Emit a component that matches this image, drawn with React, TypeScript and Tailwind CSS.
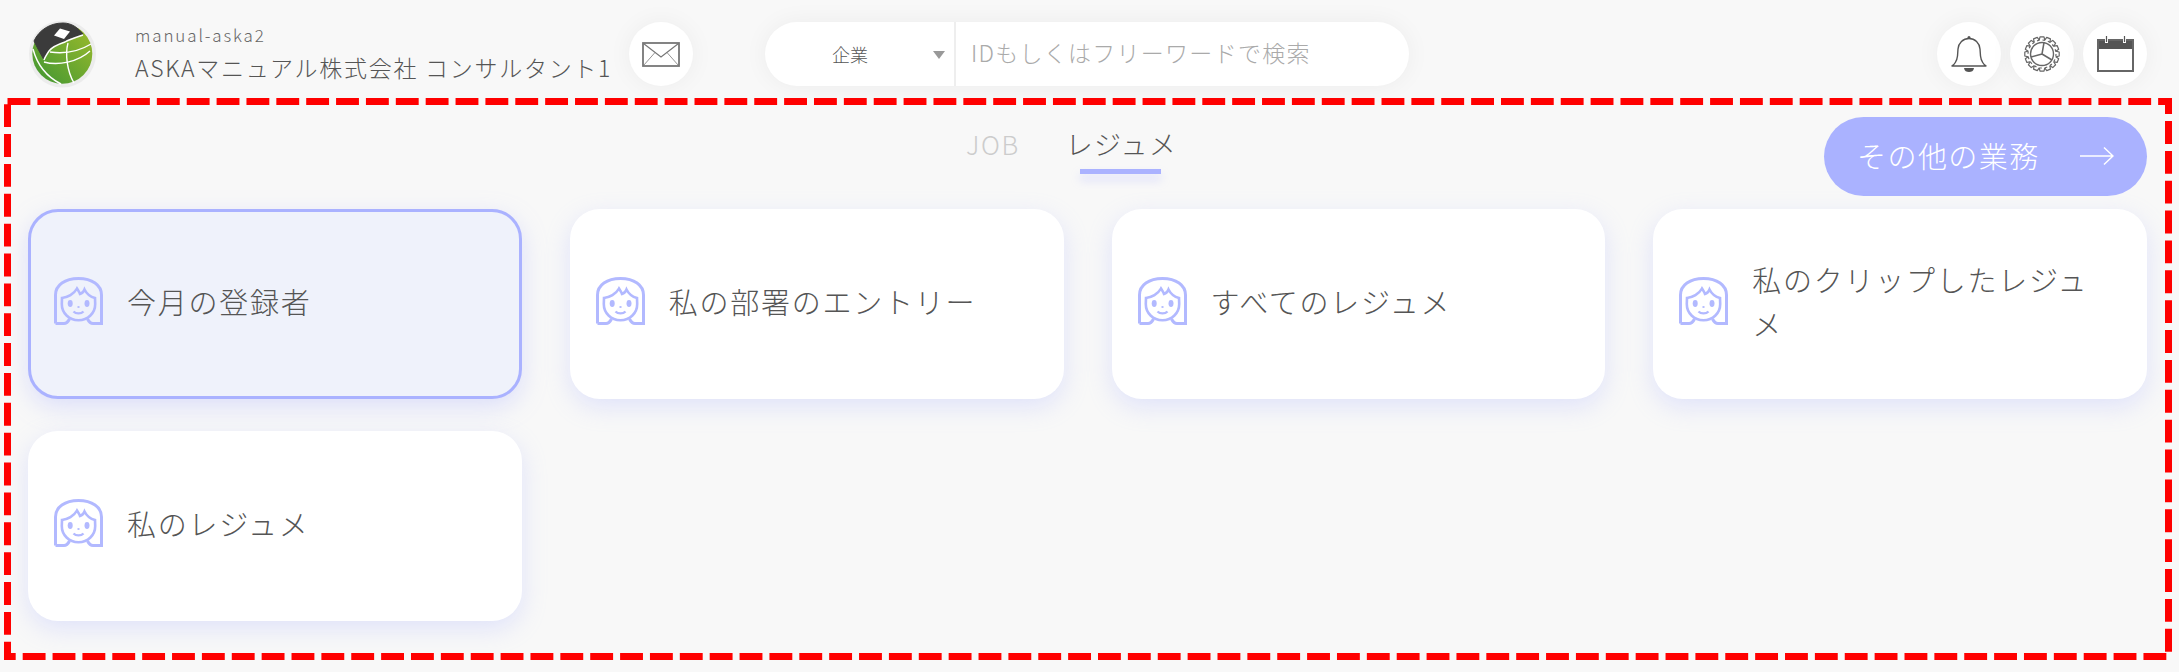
const FONT = "[font-family:'Noto_Sans_CJK_JP','Noto_Sans',sans-serif]";

function Logo() {
  return (
    <svg viewBox="0 0 70 70" className="w-[70px] h-[70px] shrink-0">
      <defs>
        <linearGradient id="lg" x1="0.9" y1="0.1" x2="0.15" y2="0.9">
          <stop offset="0" stopColor="#96b82c" />
          <stop offset="1" stopColor="#4a9a32" />
        </linearGradient>
      </defs>
      <circle cx="34.5" cy="35" r="33.5" fill="#ececec" />
      <circle cx="34.3" cy="34.8" r="30" fill="url(#lg)" />
      <path d="M6 22 C11 11 22 4 35 4 C44 4 50 9 55 15 L37 22 L22 29 L15.500 40 L10 30 Z" fill="#3b3b3b" stroke="#3b3b3b" strokeWidth="1" />
      <path d="M32 9.500 L42 12.500 L36 20 L26 16.500 Z" fill="#fff" />
      <g fill="none" stroke="#fff" strokeWidth="1.400">
        <path d="M55 16 C46 19 40 21 37 23 C28 26 24 28 21 32 C19 35 17 38 16 41" />
        <path d="M22 33 C36 35 50 33 63 25" />
        <path d="M40 24 C37 35 39 52 46 64" />
        <path d="M5 30 C9 45 19 58 33 65" />
        <path d="M16 43 C30 47 50 43 62 32" />
      </g>
    </svg>
  );
}

function Mail() {
  return (
    <svg viewBox="0 0 38 25" className="w-[38px] h-[25px]" fill="none" stroke="#777">
      <rect x="1" y="1" width="36" height="23" strokeWidth="1.800" />
      <path d="M1.500 1.500 L19 15 L36.500 1.500" strokeWidth="1.200" />
      <path d="M1.500 23.500 L13 10.500 M36.500 23.500 L25 10.500" strokeWidth="0.800" />
    </svg>
  );
}

function Bell() {
  return (
    <svg viewBox="0 0 36 36" className="w-[36px] h-[36px]" fill="none" stroke="#555">
      <path d="M1 30 C3 29 6 25 6.500 20 L7 13 C7.500 7 12 2.500 18 2.500 C24 2.500 28.500 7 29 13 L29.500 20 C30 25 33 29 35 30 Z" strokeWidth="1.400" strokeLinejoin="round" />
      <circle cx="18" cy="1.500" r="1.500" fill="#555" stroke="none" />
      <path d="M13 32 H23 C22.500 35 20.500 36 18 36 C15.500 36 13.500 35 13 32 Z" fill="#555" stroke="none" />
    </svg>
  );
}

function Gear() {
  const teeth = Array.from({ length: 16 }, (_, i) => (i * 360) / 16);
  return (
    <svg viewBox="0 0 36 36" className="w-[36px] h-[36px]" fill="none" stroke="#666" strokeWidth="1.200">
      {teeth.map((a) => (
        <path key={a} d="M15.200 4.200 L16 0.800 H20 L20.800 4.200" transform={`rotate(${a} 18 18)`} strokeLinejoin="round" />
      ))}
      <circle cx="18" cy="18" r="14" strokeDasharray="2.500 3" />
      <circle cx="18" cy="18" r="11.500" strokeWidth="1.400" />
      <path d="M18 18 L20 6.500 M18 18 L28 24 M18 18 L7 21" strokeWidth="1.500" />
    </svg>
  );
}

function Calendar() {
  return (
    <svg viewBox="0 0 37 36" className="w-[37px] h-[36px]">
      <rect x="0" y="3" width="37" height="10" fill="#555" />
      <rect x="1" y="4" width="35" height="31" fill="none" stroke="#666" strokeWidth="2" />
      <path d="M9.500 0 V7 M27.500 0 V7" stroke="#fff" strokeWidth="3" />
      <path d="M9.500 0 V6 M27.500 0 V6" stroke="#555" strokeWidth="1.200" />
    </svg>
  );
}

function Face() {
  return (
    <svg viewBox="0 0 49 48" className="w-[49px] h-[48px] shrink-0" fill="none" stroke="#b2b9ff" strokeWidth="3">
      <path d="M1.500 46.500 V18 C1.500 8 11 1.500 24.500 1.500 C38 1.500 47.500 8 47.500 18 V46.500 H39 C37 46.500 35 45 33.500 42 M1.500 46.500 H10 C12 46.500 14 45 15.500 42" />
      <path d="M7.800 27 C7.800 36 15 43.300 24.500 43.300 C34 43.300 41.200 36 41.200 27 L41 21 C37 20 33 17.500 30.500 12.500 C29.500 15 28 16.500 26 17 C25.500 15 24 13 23 11.500 C20 17 13.500 20.500 8 21 Z" strokeWidth="2.600" />
      <ellipse cx="16.200" cy="26.500" rx="2.500" ry="3.400" fill="#b2b9ff" stroke="none" />
      <ellipse cx="33" cy="26.500" rx="2.500" ry="3.400" fill="#b2b9ff" stroke="none" />
      <path d="M23.500 30 H25.500" strokeWidth="1.800" />
      <path d="M19.500 34.500 C22 37 27 37 29.500 34.500" strokeWidth="2.400" />
    </svg>
  );
}

function Round({ children }: { children: React.ReactNode }) {
  return (
    <div className="w-[64px] h-[64px] rounded-full bg-white flex items-center justify-center shadow-[0_0_24px_rgba(0,0,0,0.05)]">
      {children}
    </div>
  );
}

function Card({ label, active }: { label: string; active?: boolean }) {
  return (
    <div
      className={`h-[190px] rounded-[30px] flex items-center pb-[6px] gap-[24px] ${
        active
          ? "bg-[#eff2fb] border-[3px] border-[#aab2ff] pl-[23px] pr-[37px] shadow-[0_8px_24px_rgba(170,178,255,0.35)]"
          : "bg-white pl-[26px] pr-[40px] shadow-[0_8px_24px_rgba(170,178,255,0.3)]"
      }`}
    >
      <Face />
      <div className="text-[29px] leading-[44px] tracking-[0.06em] font-light text-[#555]">{label}</div>
    </div>
  );
}

export default function App() {
  return (
    <div className={`relative w-[2179px] h-[672px] overflow-hidden bg-[#f8f8f8] ${FONT}`}>
      <header className="flex items-center h-[108px] pl-[28px] pr-[32px]">
        <Logo />
        <div className="ml-[37px] w-[494px] shrink-0">
          <div className="text-[17px] leading-[22px] tracking-[0.11em] font-light text-[#666]">manual-aska2</div>
          <div className="mt-[6px] mb-[3px] text-[23px] leading-[30px] tracking-[0.075em] font-light text-[#555] whitespace-nowrap">
            ASKAマニュアル株式会社 コンサルタント1
          </div>
        </div>
        <Round>
          <Mail />
        </Round>
        <div className="ml-[72px] w-[644px] h-[64px] rounded-full bg-white flex items-center shadow-[0_0_24px_rgba(0,0,0,0.05)]">
          <div className="w-[191px] h-full flex items-center pl-[67px] border-r-2 border-[#eeeeee] relative">
            <span className="text-[18px] font-light text-[#555]">企業</span>
            <svg viewBox="0 0 12 8" className="w-[12px] h-[8px] absolute right-[9px] top-[29px]">
              <path d="M0 0 H12 L6 8 Z" fill="#999" />
            </svg>
          </div>
          <div className="ml-[15px] pb-[3px] text-[23px] tracking-[0.055em] font-light text-[#aaa] whitespace-nowrap">
            IDもしくはフリーワードで検索
          </div>
        </div>
        <div className="ml-auto flex gap-[9px]">
          <Round>
            <Bell />
          </Round>
          <Round>
            <Gear />
          </Round>
          <Round>
            <Calendar />
          </Round>
        </div>
      </header>
      <main className="pl-[28px] pr-[32px] pt-[9px]">
        <div className="flex h-[79px] items-start">
          <div className="ml-[938px] flex items-start gap-[46px] pt-[9px]">
            <div className="text-[26px] leading-[36px] tracking-[0.06em] font-light text-[#ccc]">JOB</div>
            <div className="relative text-[27px] leading-[36px] tracking-[0.05em] font-light text-[#555]">
              レジュメ
              <div className="absolute left-[14px] top-[43px] w-[81px] h-[5px] bg-[#aab2ff] shadow-[0_6px_10px_rgba(170,178,255,0.4)]" />
            </div>
          </div>
          <div className="ml-auto w-[323px] h-[79px] rounded-full bg-[#aab2ff] flex items-center pl-[33px] pb-[2px] text-white">
            <span className="text-[29px] tracking-[0.05em] font-light">その他の業務</span>
            <svg viewBox="0 0 34 20" className="w-[34px] h-[20px] ml-[40px]" fill="none" stroke="#fff" strokeWidth="1.500">
              <path d="M0 10 H33 M24 1.500 L33 10 L24 18.500" />
            </svg>
          </div>
        </div>
        <div className="mt-[13px] grid grid-cols-4 gap-x-[48px] gap-y-[32px]">
          <Card label="今月の登録者" active />
          <Card label="私の部署のエントリー" />
          <Card label="すべてのレジュメ" />
          <Card label="私のクリップしたレジュメ" />
          <Card label="私のレジュメ" />
        </div>
      </main>
      <svg className="absolute inset-0 w-[2179px] h-[672px] pointer-events-none" viewBox="0 0 2179 672" fill="none">
        <rect x="7.500" y="101.500" width="2161" height="555" stroke="#ff0000" strokeWidth="7" strokeDasharray="22.870 7" />
      </svg>
    </div>
  );
}
